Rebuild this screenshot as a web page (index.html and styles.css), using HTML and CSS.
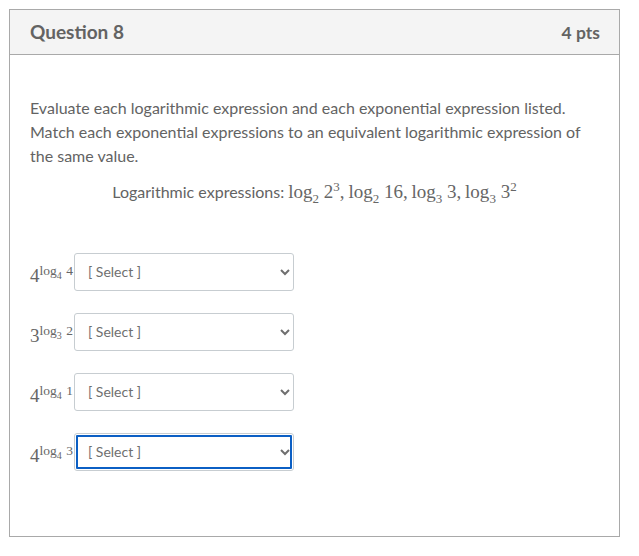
FILE: index.html
```html
<!DOCTYPE html>
<html lang="en">
<head>
    <meta charset="UTF-8">
    <title>Question 8</title>
    <link rel="stylesheet" href="styles.css">
</head>
<body>
<div class="question">
    <div class="question-header">
        <span class="question-name">Question 8</span>
        <span class="question-points">4 pts</span>
    </div>
    <div class="question-body">
        <p class="question-text">Evaluate each logarithmic expression and each exponential expression listed. Match each exponential expressions to an equivalent logarithmic expression of the same value.</p>
        <p class="question-list">Logarithmic expressions: <span class="math">log<sub>2</sub> 2<sup>3</sup>,&thinsp;log<sub>2</sub> 16,&thinsp;log<sub>3</sub> 3,&thinsp;log<sub>3</sub> 3<sup>2</sup></span></p>
        <div class="answers">
            <div class="answer">
                <span class="math power">4<sup>log<sub>4</sub> 4</sup></span>
                <select class="answer-select"><option>[ Select ]</option></select>
            </div>
            <div class="answer">
                <span class="math power">3<sup>log<sub>3</sub> 2</sup></span>
                <select class="answer-select"><option>[ Select ]</option></select>
            </div>
            <div class="answer">
                <span class="math power">4<sup>log<sub>4</sub> 1</sup></span>
                <select class="answer-select"><option>[ Select ]</option></select>
            </div>
            <div class="answer">
                <span class="math power">4<sup>log<sub>4</sub> 3</sup></span>
                <select class="answer-select is-focused"><option>[ Select ]</option></select>
            </div>
        </div>
    </div>
</div>
</body>
</html>
```

FILE: styles.css
```css
body {
    background-color: #fff;
    margin: 9px 0 0 9px;
    padding: 0;
    font-size: 16px;
    font-family: "Lato", sans-serif;
    color: #636363;
}
.question {
    width: 611px;
    height: 528px;
    box-sizing: border-box;
    border: 1px solid #a9a9a9;
}
.question-header {
    display: flex;
    justify-content: space-between;
    align-items: center;
    height: 44px;
    box-sizing: content-box;
    padding: 0 19px 0 20px;
    background-color: #f4f4f4;
    border-bottom: 1px solid #a9a9a9;
    font-weight: 700;
}
.question-name {
    font-size: 19px;
    margin-bottom: 2px;
}
.question-points {
    font-size: 17.5px;
}
.question-body {
    padding: 41px 20px 0;
}
.question-text {
    margin: 0;
    line-height: 24px;
}
.question-list {
    margin: 12px 0 0;
    line-height: 24px;
    text-align: center;
}
.math {
    font-family: "Liberation Serif", serif;
    font-size: 19px;
    color: #666;
}
.math sub, .math sup {
    font-size: 13px;
    line-height: 0;
}
.math sup sub {
    font-size: 10px;
}
.answers {
    margin-top: 49px;
    display: flex;
    flex-direction: column;
    gap: 22px;
}
.answer {
    display: flex;
    align-items: center;
    gap: 2px;
}
.power {
    width: 42px;
    padding-top: 8px;
    white-space: nowrap;
}
.power sup {
    font-size: 13.5px;
    word-spacing: 1px;
}
.answer-select {
    width: 220px;
    height: 38px;
    box-sizing: border-box;
    padding: 0 9px 2px;
    background-color: #fff;
    border: 1px solid #c7cdd1;
    border-radius: 3px;
    font-family: "Lato", sans-serif;
    font-size: 14px;
    color: #6f6f6f;
}
.answer-select.is-focused {
    outline: 2px solid #0b5fc4;
    outline-offset: -4px;
}
```
